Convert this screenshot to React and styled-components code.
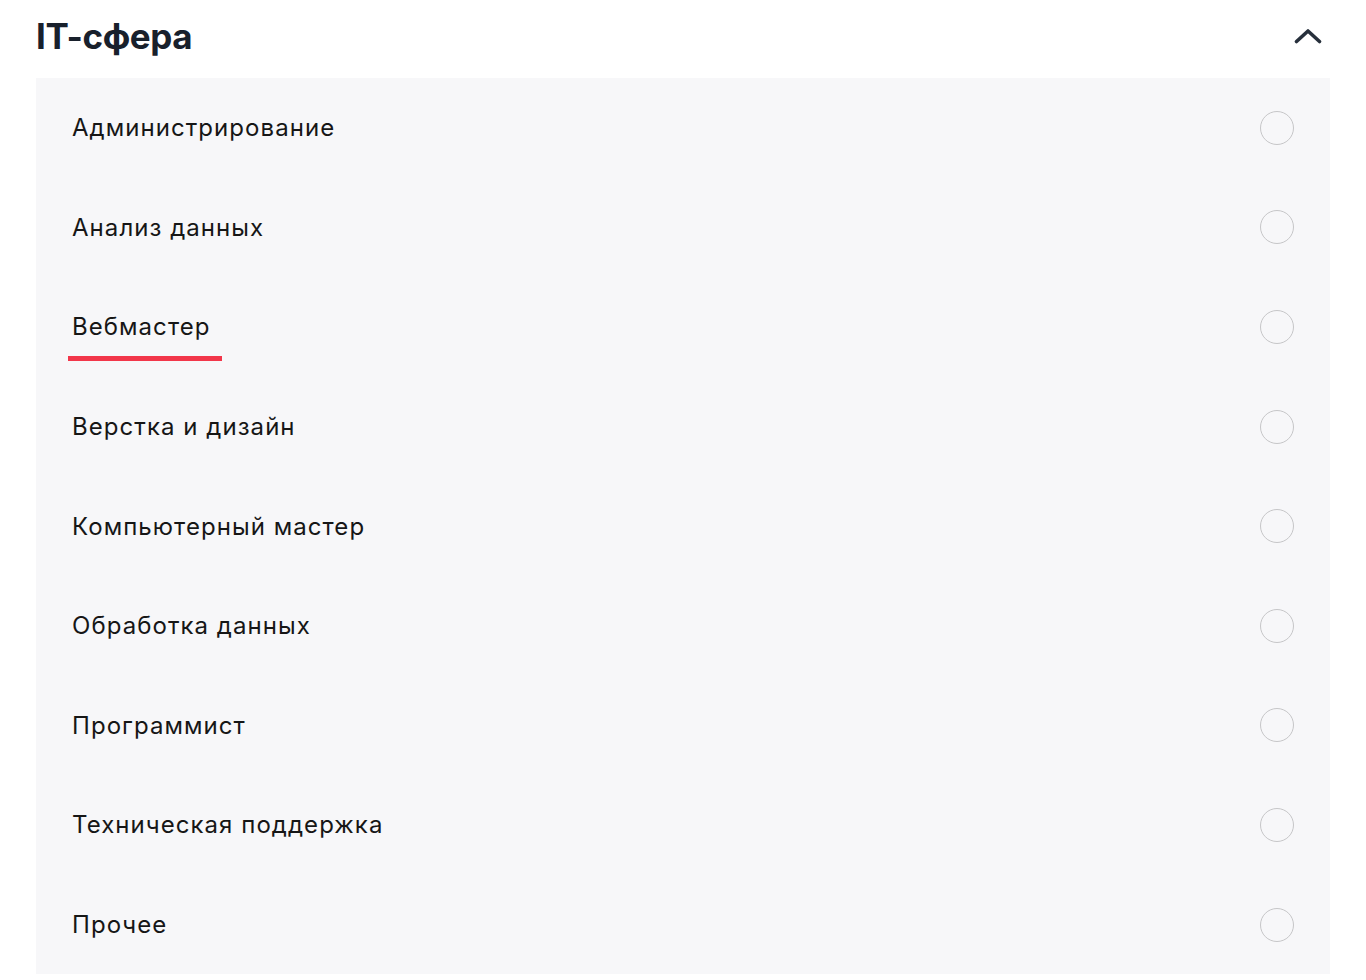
import React from "react";
import styled, { createGlobalStyle } from "styled-components";

const Global = createGlobalStyle`
  html, body { margin: 0; padding: 0; background: #ffffff; }
  body { font-family: Inter, "Noto Sans", sans-serif; -webkit-font-smoothing: antialiased; }
`;

const Page = styled.div`
  padding: 0 36px 0 36px;
  width: 1366px;
  box-sizing: border-box;
`;

const Header = styled.div`
  display: flex;
  align-items: center;
  justify-content: space-between;
  height: 78px;
  box-sizing: border-box;
  padding-bottom: 7px;
`;

const Title = styled.h2`
  margin: 0;
  font-size: 35px;
  font-weight: 700;
  color: #18202c;
  letter-spacing: -0.4px;
`;

const Toggle = styled.button`
  border: 0;
  background: none;
  padding: 0;
  width: 28px;
  height: 20px;
  display: flex;
  align-items: center;
  justify-content: center;
  margin-right: 8px;
  cursor: pointer;
`;

const Panel = styled.div`
  background: #f7f7f9;
  display: flex;
  flex-direction: column;
`;

const Row = styled.label`
  display: flex;
  align-items: center;
  justify-content: space-between;
  height: 99.6px;
  padding: 0 36px;
  cursor: pointer;
`;

const Label = styled.span`
  position: relative;
  font-size: 24px;
  font-weight: 400;
  color: #161616;
  letter-spacing: 1.05px;
  ${(p) =>
    p.$marked &&
    `
    &::after {
      content: "";
      position: absolute;
      left: -4px;
      right: -11px;
      bottom: -20px;
      height: 5px;
      background: #f2364a;
    }
  `}
`;

const Radio = styled.span`
  width: 34px;
  height: 34px;
  border-radius: 50%;
  border: 1.8px solid #c6c6c8;
  box-sizing: border-box;
  flex-shrink: 0;
`;

const items = [
  "Администрирование",
  "Анализ данных",
  "Вебмастер",
  "Верстка и дизайн",
  "Компьютерный мастер",
  "Обработка данных",
  "Программист",
  "Техническая поддержка",
  "Прочее",
];

export default function App() {
  return (
    <Page>
      <Global />
      <Header>
        <Title>IT-сфера</Title>
        <Toggle aria-label="Свернуть">
          <svg width="28" height="16" viewBox="0 0 28 16">
            <path
              d="M2.5 13.5 L14 3 L25.5 13.5"
              fill="none"
              stroke="#27303c"
              strokeWidth="3.6"
              strokeLinecap="round"
              strokeLinejoin="round"
            />
          </svg>
        </Toggle>
      </Header>
      <Panel>
        {items.map((t) => (
          <Row key={t}>
            <Label $marked={t === "Вебмастер"}>{t}</Label>
            <Radio />
          </Row>
        ))}
      </Panel>
    </Page>
  );
}
